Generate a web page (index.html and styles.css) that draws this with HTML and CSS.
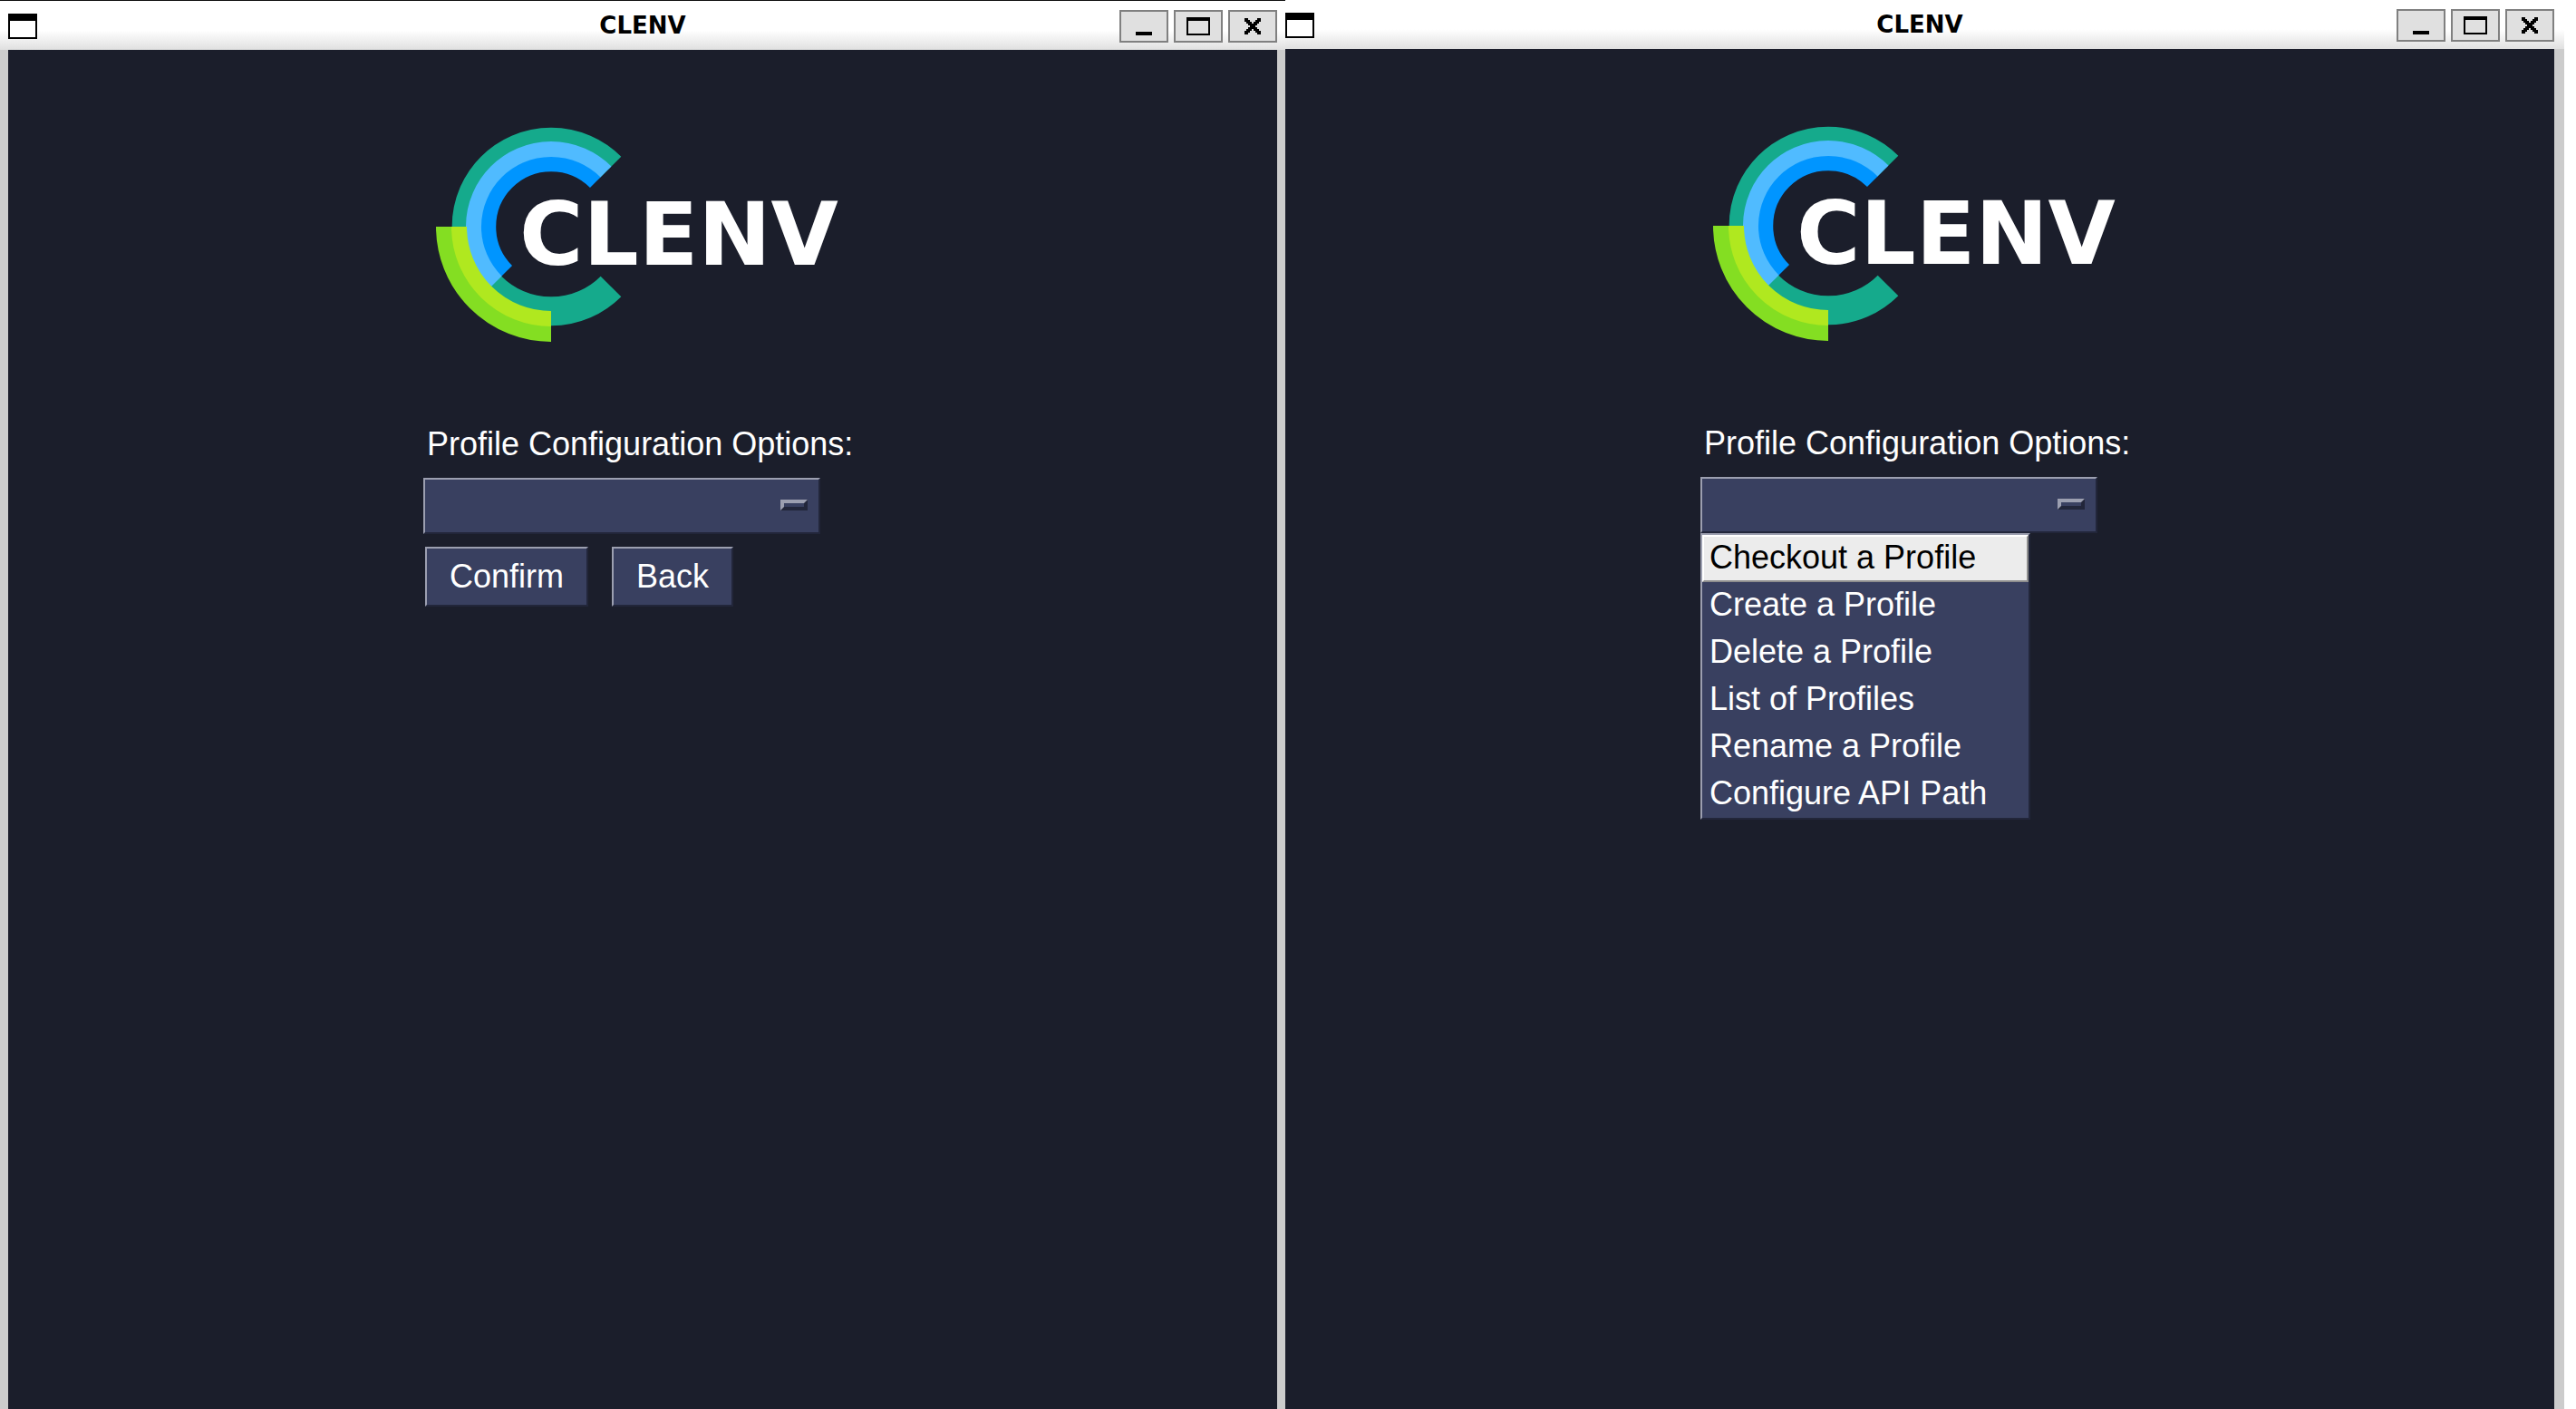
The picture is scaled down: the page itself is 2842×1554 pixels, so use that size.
FILE: index.html
```
<!DOCTYPE html>
<html lang="en">
<head>
<meta charset="utf-8">
<title>CLENV</title>
<link rel="stylesheet" href="styles.css">
</head>
<body>
<svg class="defs" aria-hidden="true">
  <symbol id="icon-window" viewBox="0 0 32 28"><path fill="#000" d="M0 0H32V28H0Z"/><path fill="#fff" d="M2 8H30V26H2Z"/></symbol>
  <symbol id="icon-minimize" viewBox="0 0 26 20"><path d="M4 16H22V20H4Z"/></symbol>
  <symbol id="icon-maximize" viewBox="0 0 26 20"><path fill-rule="evenodd" d="M0 0H26V20H0ZM2 4V18H24V4Z"/></symbol>
  <symbol id="icon-close" viewBox="0 0 18 18"><path d="M0 0H4V2H6V4H8V6H10V4H12V2H14V0H18V4H16V6H14V8H12V10H14V12H16V14H18V18H14V16H12V14H10V12H8V14H6V16H4V18H0V14H2V12H4V10H6V8H4V6H2V4H0Z"/></symbol>
  <symbol id="logo" viewBox="0 0 484 260">
    <g fill="none">
      <path stroke="#15aa8c" stroke-width="32" d="M207 57A93.340 93.340 0 1 0 207 189"/>
      <path stroke="#0095ff" stroke-width="17" d="M190 74A69 69 0 0 0 92 172"/>
      <path stroke="#50bbff" stroke-width="17" d="M201.500 62.500A85 85 0 0 0 80.500 183.500"/>
      <path stroke="#84de22" stroke-width="18" d="M23 123A118 118 0 0 0 141 241"/>
      <path stroke="#b0e81f" stroke-width="17" d="M39.500 123A101.500 101.500 0 0 0 141 224.500"/>
    </g>
    <text class="logo-text" x="106" y="165">CLENV</text>
  </symbol>
</svg>
<main class="desktop">
  <section class="window window-left">
    <header class="titlebar">
      <svg class="app-icon" aria-hidden="true"><use href="#icon-window"/></svg>
      <h1 class="title">CLENV</h1>
      <div class="controls">
        <button class="control" type="button" aria-label="Minimize"><svg class="glyph"><use href="#icon-minimize"/></svg></button>
        <button class="control" type="button" aria-label="Maximize"><svg class="glyph"><use href="#icon-maximize"/></svg></button>
        <button class="control" type="button" aria-label="Close"><svg class="glyph glyph-close"><use href="#icon-close"/></svg></button>
      </div>
    </header>
    <div class="client">
      <form class="panel">
        <svg class="logo" role="img" aria-label="CLENV"><use href="#logo"/></svg>
        <label class="label" for="options-left">Profile Configuration Options:</label>
        <div class="option-menu">
          <select class="select" id="options-left">
            <option></option>
            <option>Checkout a Profile</option>
            <option>Create a Profile</option>
            <option>Delete a Profile</option>
            <option>List of Profiles</option>
            <option>Rename a Profile</option>
            <option>Configure API Path</option>
          </select>
        </div>
        <div class="actions">
          <button class="button" type="button">Confirm</button>
          <button class="button" type="button">Back</button>
        </div>
      </form>
    </div>
  </section>
  <section class="window window-right">
    <header class="titlebar">
      <svg class="app-icon" aria-hidden="true"><use href="#icon-window"/></svg>
      <h1 class="title">CLENV</h1>
      <div class="controls">
        <button class="control" type="button" aria-label="Minimize"><svg class="glyph"><use href="#icon-minimize"/></svg></button>
        <button class="control" type="button" aria-label="Maximize"><svg class="glyph"><use href="#icon-maximize"/></svg></button>
        <button class="control" type="button" aria-label="Close"><svg class="glyph glyph-close"><use href="#icon-close"/></svg></button>
      </div>
    </header>
    <div class="client">
      <form class="panel">
        <svg class="logo" role="img" aria-label="CLENV"><use href="#logo"/></svg>
        <label class="label" for="options-right">Profile Configuration Options:</label>
        <div class="option-menu">
          <select class="select" id="options-right">
            <option></option>
          </select>
          <div class="menu" role="menu">
            <button class="menu-item menu-item-active" type="button" role="menuitem">Checkout a Profile</button>
            <button class="menu-item" type="button" role="menuitem">Create a Profile</button>
            <button class="menu-item" type="button" role="menuitem">Delete a Profile</button>
            <button class="menu-item" type="button" role="menuitem">List of Profiles</button>
            <button class="menu-item" type="button" role="menuitem">Rename a Profile</button>
            <button class="menu-item" type="button" role="menuitem">Configure API Path</button>
          </div>
        </div>
      </form>
    </div>
  </section>
</main>
</body>
</html>
```
FILE: styles.css
```
:root {
  --navy: #1b1e2b;
  --field: #394060;
  --light: #9c9fb0;
  --dark: #22263a;
  --frame: #cccccc;
}

*, *::after { box-sizing: border-box; }

body {
  margin: 0;
  background: #fff;
  color: #fff;
  font-family: "Liberation Sans", Arial, sans-serif;
  font-size: 36px;
}

button, select { font: inherit; color: inherit; border-radius: 0; margin: 0; }

.defs { display: none; }

.desktop {
  display: grid;
  grid-template-columns: minmax(0, 1418fr) minmax(0, 1411fr);
  min-height: 100vh;
  padding-right: 13px;
}

.window { display: flex; flex-direction: column; }
.window-left { border-top: 1px solid #111; }

.titlebar {
  display: grid;
  grid-template-columns: 1fr auto 1fr;
  align-items: center;
  height: 54px;
  padding-top: 2px;
  background: linear-gradient(#fff 60%, #e0e0e0);
  color: #000;
}
.window-left .titlebar { padding-left: 9px; padding-right: 9px; }
.window-right .titlebar { padding-right: 11px; }

.app-icon { width: 32px; height: 28px; }

.title {
  margin: 0;
  padding-bottom: 2px;
  font: bold 26px/32px "DejaVu Sans", sans-serif;
}

.controls { display: flex; justify-content: flex-end; gap: 6px; }

.control {
  display: flex;
  align-items: center;
  justify-content: center;
  width: 54px;
  height: 36px;
  padding: 0;
  border: 2px solid #808080;
  background: #e0e0e0;
}

.glyph { width: 26px; height: 20px; }
.glyph-close { width: 18px; height: 18px; }

.client {
  flex: 1;
  padding-top: 72px;
  border: 0 solid var(--frame);
  background: var(--navy);
}
.window-left .client { border-width: 0 9px; }
.window-right .client { border-right-width: 11px; }

.panel { width: 484px; margin: 0 auto; }

.logo { display: block; width: 484px; height: 260px; }
.logo-text { font: bold 96px "DejaVu Sans", sans-serif; fill: #fff; }

.label {
  display: block;
  margin: 77px 0 11px;
  padding-left: 4px;
  line-height: 52px;
  white-space: nowrap;
}

.option-menu { position: relative; width: 438px; }
.option-menu::after {
  content: "";
  position: absolute;
  top: 24px;
  right: 14px;
  width: 30px;
  height: 12px;
  border: 4px solid;
  border-color: var(--light) var(--dark) var(--dark) var(--light);
  pointer-events: none;
}

.select, .button, .menu {
  border: 2px solid;
  border-color: var(--light) var(--dark) var(--dark) var(--light);
  background: var(--field);
}

.select { display: block; appearance: none; width: 100%; height: 62px; padding: 0 60px 0 10px; }

.actions { display: flex; gap: 26px; margin: 14px 0 0 2px; }
.button { height: 66px; padding: 0 25px; }

.menu {
  position: absolute;
  top: 100%;
  left: 0;
  width: 364px;
}

.menu-item {
  display: block;
  width: 100%;
  height: 52px;
  padding: 0 6px 2px;
  border: 2px solid transparent;
  background: none;
  line-height: 46px;
  text-align: left;
  white-space: nowrap;
}
.menu-item-active {
  border-color: #fff #8e8e8e #8e8e8e #fff;
  background: #ececec;
  color: #000;
}
```
